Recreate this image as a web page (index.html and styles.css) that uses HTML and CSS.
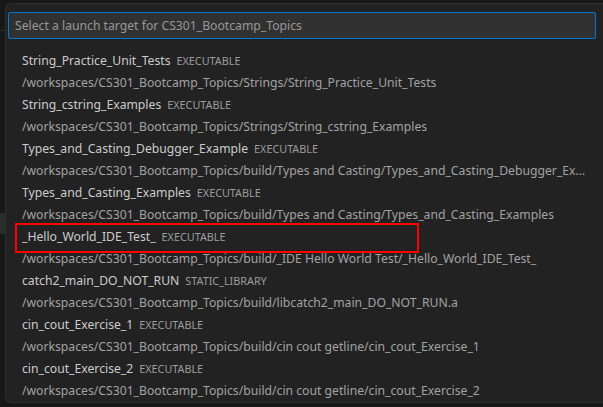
FILE: index.html
```html
<!DOCTYPE html>
<html>
<head>
<meta charset="utf-8">
<link rel="stylesheet" href="styles.css">
</head>
<body>
<div class="layout">
  <div class="gutter">
    <div class="g-line"></div>
    <div class="g-hl"></div>
  </div>
  <div class="panel">
    <div class="input">Select a launch target for CS301_Bootcamp_Topics</div>
    <div class="list">
      <div class="item">
        <div class="label">String_Practice_Unit_Tests<span class="kind">EXECUTABLE</span></div>
        <div class="path">/workspaces/CS301_Bootcamp_Topics/Strings/String_Practice_Unit_Tests</div>
      </div>
      <div class="item">
        <div class="label">String_cstring_Examples<span class="kind">EXECUTABLE</span></div>
        <div class="path">/workspaces/CS301_Bootcamp_Topics/Strings/String_cstring_Examples</div>
      </div>
      <div class="item">
        <div class="label">Types_and_Casting_Debugger_Example<span class="kind">EXECUTABLE</span></div>
        <div class="path">/workspaces/CS301_Bootcamp_Topics/build/Types and Casting/Types_and_Casting_Debugger_Example</div>
      </div>
      <div class="item">
        <div class="label">Types_and_Casting_Examples<span class="kind">EXECUTABLE</span></div>
        <div class="path">/workspaces/CS301_Bootcamp_Topics/build/Types and Casting/Types_and_Casting_Examples</div>
      </div>
      <div class="item">
        <div class="label">_Hello_World_IDE_Test_<span class="kind">EXECUTABLE</span></div>
        <div class="path">/workspaces/CS301_Bootcamp_Topics/build/_IDE Hello World Test/_Hello_World_IDE_Test_</div>
        <div class="mark"></div>
      </div>
      <div class="item">
        <div class="label">catch2_main_DO_NOT_RUN<span class="kind">STATIC_LIBRARY</span></div>
        <div class="path">/workspaces/CS301_Bootcamp_Topics/build/libcatch2_main_DO_NOT_RUN.a</div>
      </div>
      <div class="item">
        <div class="label">cin_cout_Exercise_1<span class="kind">EXECUTABLE</span></div>
        <div class="path">/workspaces/CS301_Bootcamp_Topics/build/cin cout getline/cin_cout_Exercise_1</div>
      </div>
      <div class="item">
        <div class="label">cin_cout_Exercise_2<span class="kind">EXECUTABLE</span></div>
        <div class="path">/workspaces/CS301_Bootcamp_Topics/build/cin cout getline/cin_cout_Exercise_2</div>
      </div>
    </div>
  </div>
</div>
</body>
</html>
```

FILE: styles.css
```css
html, body {
  margin: 0;
  padding: 0;
  background: #181818;
  height: 407px;
  overflow: hidden;
  font-family: "Noto Sans", "Open Sans", sans-serif;
}
.layout {
  display: flex;
  height: 407px;
}
.gutter {
  width: 5px;
  flex: none;
  display: flex;
  flex-direction: column;
}
.g-line {
  margin-top: 30px;
  height: 1px;
  background: #2b2b2b;
}
.g-hl {
  margin-top: 182px;
  height: 21px;
  background: #2a2d2e;
}
.panel {
  flex: 1;
  margin-top: 3px;
  height: 400px;
  box-sizing: border-box;
  background: #222222;
  border: 1px solid #2e2e2e;
  border-right: none;
  border-radius: 6px 0 0 6px;
  padding: 8px 7px 0 2px;
  overflow: hidden;
}
.input {
  height: 27px;
  box-sizing: border-box;
  border: 1px solid #0078d4;
  border-radius: 2px;
  background: #313131;
  color: #989898;
  font-size: 12.2px;
  line-height: 25px;
  padding-left: 6px;
  white-space: nowrap;
  overflow: hidden;
}
.list {
  margin-top: 11px;
}
.item {
  position: relative;
  padding: 0 9px 0 14px;
}
.label, .path {
  height: 22px;
  line-height: 22px;
  font-size: 12.2px;
  white-space: nowrap;
  overflow: hidden;
  text-overflow: ellipsis;
}
.label {
  color: #cccccc;
}
.kind {
  color: #9d9d9d;
  font-size: 10.8px;
  margin-left: 6px;
}
.path {
  color: #a3a3a3;
}
.mark {
  position: absolute;
  left: 7px;
  top: -3px;
  width: 404px;
  height: 30px;
  box-sizing: border-box;
  border: 2px solid #ff0000;
}
```
